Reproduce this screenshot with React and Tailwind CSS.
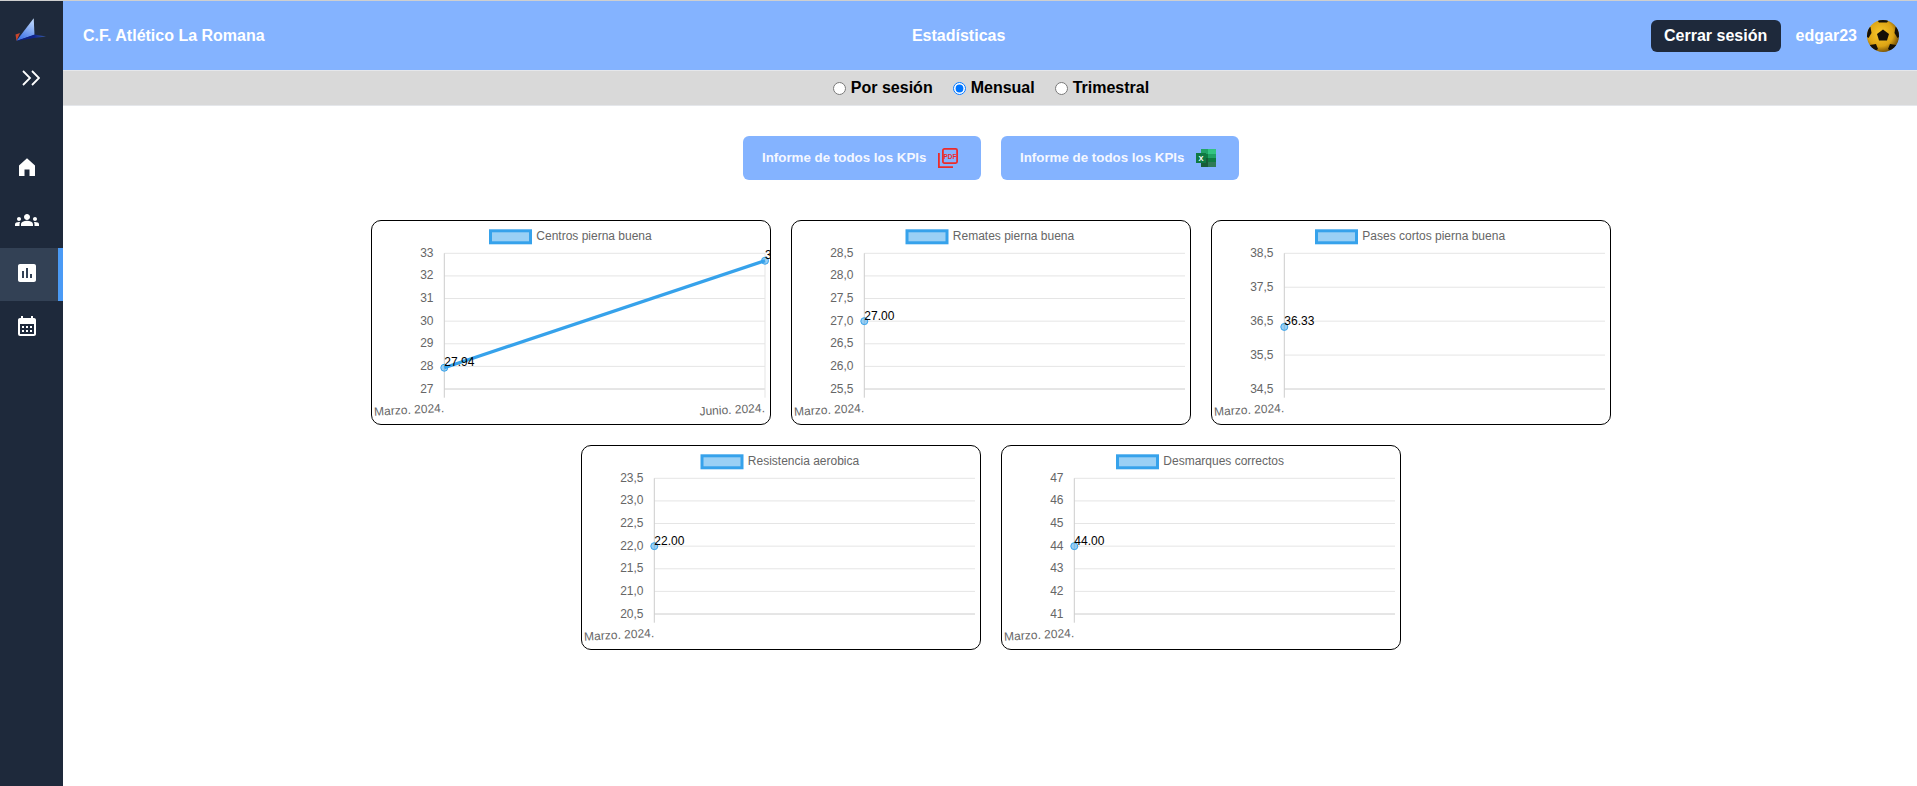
import React from 'react';
import { MdGroups, MdInsertChart, MdCalendarMonth } from 'react-icons/md';

// Plot area of every chart, in px inside the card
const PLOT = { left: 73.3, right: 394, top: 33.3, bottom: 169 };

const charts = [
  [
    { title: 'Centros pierna buena', legendX: 118, ticks: ['33', '32', '31', '30', '29', '28', '27'], max: 33, min: 27, points: [27.94, 32.67], labels: ['27.94', '32.67'] },
    { title: 'Remates pierna buena', legendX: 114.5, ticks: ['28,5', '28,0', '27,5', '27,0', '26,5', '26,0', '25,5'], max: 28.5, min: 25.5, points: [27], labels: ['27.00'] },
    { title: 'Pases cortos pierna buena', legendX: 104, ticks: ['38,5', '37,5', '36,5', '35,5', '34,5'], max: 38.5, min: 34.5, points: [36.33], labels: ['36.33'] },
  ],
  [
    { title: 'Resistencia aerobica', legendX: 119.5, ticks: ['23,5', '23,0', '22,5', '22,0', '21,5', '21,0', '20,5'], max: 23.5, min: 20.5, points: [22], labels: ['22.00'] },
    { title: 'Desmarques correctos', legendX: 115, ticks: ['47', '46', '45', '44', '43', '42', '41'], max: 47, min: 41, points: [44], labels: ['44.00'] },
  ],
];

const HomeIcon = () => (
  <svg width="18" height="18" viewBox="0 0 18 18" fill="white">
    <path d="M9 0.3 L17 7.5 V17.5 a0.5 0.5 0 0 1 -0.5 0.5 H11.5 V11.5 H6.5 V18 H1.5 a0.5 0.5 0 0 1 -0.5 -0.5 V7.5 Z" />
  </svg>
);

const Logo = () => (
  <svg width="32" height="24" viewBox="15 18 32 24" className="block">
    <defs>
      <linearGradient id="sail" x1="0.8" y1="0" x2="0.4" y2="1">
        <stop offset="0" stopColor="#c4dcff" />
        <stop offset="1" stopColor="#3f74e6" />
      </linearGradient>
      <linearGradient id="tail" x1="0" y1="0" x2="1" y2="0">
        <stop offset="0" stopColor="#0a1a80" />
        <stop offset="0.6" stopColor="#10248c" />
        <stop offset="1" stopColor="#3a5fa8" />
      </linearGradient>
    </defs>
    <polygon points="15.5,34.5 20,33 16.5,41" fill="#c8452c" />
    <polygon points="33.7,18.3 16.5,40.7 34.5,35" fill="url(#sail)" />
    <polygon points="16.5,41 34.5,34.5 46,36.5 34,38" fill="url(#tail)" />
  </svg>
);

const Ball = () => (
  <svg width="32" height="32" viewBox="0 0 32 32" className="block">
    <defs>
      <radialGradient id="gold" cx="0.42" cy="0.42" r="0.62">
        <stop offset="0" stopColor="#fbc92c" />
        <stop offset="0.65" stopColor="#dca314" />
        <stop offset="1" stopColor="#6d4a06" />
      </radialGradient>
      <clipPath id="ballClip">
        <circle cx="16" cy="16" r="16" />
      </clipPath>
    </defs>
    <circle cx="16" cy="16" r="16" fill="url(#gold)" />
    <g fill="#151008" clipPath="url(#ballClip)">
      <polygon points="16,9.5 22,14 20,20.5 12,20.5 10,14" />
      <polygon points="10,0 22,0 20,2.5 12,2.5" />
      <polygon points="0,8 3.5,7 4.5,13 1.5,18 0,17" />
      <polygon points="32,8 28.5,7 27.5,13 30.5,18 32,17" />
      <polygon points="3,25 9,24 11,29 7,32 3,29" />
      <polygon points="29,25 23,24 21,29 25,32 29,29" />
    </g>
  </svg>
);

const PdfIcon = () => (
  <svg width="20" height="20" viewBox="0 0 20 20" fill="none" stroke="#ec2b2b" strokeWidth="1.8" className="shrink-0">
    <rect x="4.9" y="0.9" width="14.2" height="14.2" rx="1.5" />
    <path d="M0.9 5 V19.1 H15" />
    <text x="12" y="10.8" textAnchor="middle" fontSize="6.5" fontWeight="700" fill="#ec2b2b" stroke="none">PDF</text>
  </svg>
);

const ExcelIcon = () => (
  <svg width="20" height="18" viewBox="0 0 20 18" className="shrink-0">
    <rect x="5" y="0" width="7" height="5" fill="#21a366" />
    <rect x="12" y="0" width="8" height="5" fill="#33c481" />
    <rect x="5" y="5" width="7" height="4" fill="#107c41" />
    <rect x="12" y="5" width="8" height="4" fill="#21a366" />
    <rect x="5" y="9" width="7" height="4" fill="#185c37" />
    <rect x="12" y="9" width="8" height="4" fill="#107c41" />
    <rect x="5" y="13" width="7" height="5" fill="#185c37" />
    <rect x="12" y="13" width="8" height="5" fill="#2f7a55" />
    <rect x="0" y="4" width="10" height="10" fill="#0f7a43" />
    <text x="5" y="11.8" textAnchor="middle" fontSize="7.5" fontWeight="700" fill="white">X</text>
  </svg>
);

// Line chart card drawn by hand
const ChartCard = ({ chart }) => {
  const { left, right, top, bottom } = PLOT;
  const n = chart.ticks.length;
  const step = (bottom - top) / (n - 1);
  const yOf = (v) => top + ((chart.max - v) / (chart.max - chart.min)) * (bottom - top);
  const xOf = (i) => (chart.points.length > 1 ? left + (i * (right - left)) / (chart.points.length - 1) : left);
  const xLabels = chart.points.length > 1 ? ['Marzo. 2024.', 'Junio. 2024.'] : ['Marzo. 2024.'];

  return (
    <div className="w-[400px] h-[205px] border border-black rounded-[10px] overflow-hidden bg-white">
      <svg width="398" height="203" className="block text-[12px]">
        <g transform="translate(-1 -1)">
          <rect x={chart.legendX + 1.5} y="10.8" width="40" height="12" fill="rgba(54,162,235,0.5)" stroke="#36a2eb" strokeWidth="3" />
          <text x={chart.legendX + 47.3} y="20" fill="#666">{chart.title}</text>

          {chart.ticks.map((t, i) => {
            const y = top + i * step;
            return (
              <g key={t}>
                <line x1={left} x2={right} y1={y} y2={y} stroke={i === n - 1 ? '#ccc' : '#e5e5e5'} />
                <text x="62.5" y={y + 3.5} textAnchor="end" fill="#666">{t}</text>
              </g>
            );
          })}

          {xLabels.map((label, i) => {
            const x = xOf(i);
            return (
              <g key={label}>
                <line x1={x} x2={x} y1={top} y2="177.7" stroke={i === 0 ? '#ccc' : '#e5e5e5'} />
                <text x={x} y="192" textAnchor="end" fill="#666" transform={`rotate(-3 ${x} 192)`}>{label}</text>
              </g>
            );
          })}

          {chart.points.length > 1 && (
            <line x1={xOf(0)} y1={yOf(chart.points[0])} x2={xOf(1)} y2={yOf(chart.points[1])} stroke="#36a2eb" strokeWidth="3.3" />
          )}
          {chart.points.map((p, i) => (
            <circle key={i} cx={xOf(i)} cy={yOf(p)} r="3.5" fill="rgba(54,162,235,0.5)" stroke="#36a2eb" />
          ))}
          {chart.points.map((p, i) => (
            <text key={i} x={xOf(i)} y={yOf(p) - 1.5} fill="#000">{chart.labels[i]}</text>
          ))}
        </g>
      </svg>
    </div>
  );
};

const NavItem = ({ children, active }) => (
  <div className={active ? 'h-[53px] flex items-center bg-[#334155] border-r-[5px] border-[#4a9af5]' : 'h-[53px] flex items-center'}>
    <span className="w-[54px] flex justify-center pb-1">{children}</span>
  </div>
);

const RadioOption = ({ label, checked }) => (
  <label className="flex items-center gap-[5px] text-black text-base font-bold">
    <input type="radio" name="periodo" defaultChecked={checked} className="w-[13px] h-[13px]" />
    {label}
  </label>
);

const ReportButton = ({ children }) => (
  <button className="w-[238px] h-[44px] pl-[19px] flex items-center gap-[12px] bg-[#84b3ff] rounded-md text-[#f4f7ff] text-[13.33px] font-bold">
    Informe de todos los KPIs
    {children}
  </button>
);

export default function App() {
  return (
    <div className="flex h-screen border-t border-[#cfcfcf] bg-white font-['Liberation_Sans',sans-serif] overflow-hidden">
      <aside className="w-[63px] shrink-0 bg-[#1e293b] pt-[17px]">
        <div className="pl-[15px]">
          <Logo />
        </div>
        <div className="mt-[28px] h-[16px] pl-[22px]">
          <svg width="18" height="16" viewBox="0 0 18 16" fill="none" stroke="white" strokeWidth="1.8">
            <path d="M1 1 L8 8 L1 15" />
            <path d="M10 1 L17 8 L10 15" />
          </svg>
        </div>
        <nav className="mt-[56px]">
          <NavItem><HomeIcon /></NavItem>
          <NavItem><MdGroups size={24} color="white" /></NavItem>
          <NavItem active><MdInsertChart size={24} color="white" /></NavItem>
          <NavItem><MdCalendarMonth size={24} color="white" /></NavItem>
        </nav>
      </aside>

      <main className="flex-1 min-w-0">
        <header className="h-[70px] flex items-center justify-between pl-5 pr-[18px] bg-[#84b3ff] border-b border-[#e5e7eb] text-white font-bold">
          <span className="text-base">C.F. Atlético La Romana</span>
          <span className="text-base pl-0.5">Estadísticas</span>
          <div className="flex items-center">
            <button className="w-[130px] h-[32px] bg-[#1e293b] rounded-md text-white text-base font-bold">Cerrar sesión</button>
            <span className="ml-[15px] text-base">edgar23</span>
            <span className="ml-[10px]"><Ball /></span>
          </div>
        </header>

        <div className="h-[35px] flex items-center justify-center gap-[20px] pl-[2px] bg-[#d9d9d9] border-b border-[#e5e7eb]">
          <RadioOption label="Por sesión" />
          <RadioOption label="Mensual" checked />
          <RadioOption label="Trimestral" />
        </div>

        <div className="flex justify-center gap-5 mt-[30px] pl-0.5">
          <ReportButton><PdfIcon /></ReportButton>
          <ReportButton><ExcelIcon /></ReportButton>
        </div>

        <div className="flex flex-col gap-5 mt-[40px] pl-0.5">
          {charts.map((row, i) => (
            <div key={i} className="flex justify-center gap-5">
              {row.map((c) => (
                <ChartCard key={c.title} chart={c} />
              ))}
            </div>
          ))}
        </div>
      </main>
    </div>
  );
}
